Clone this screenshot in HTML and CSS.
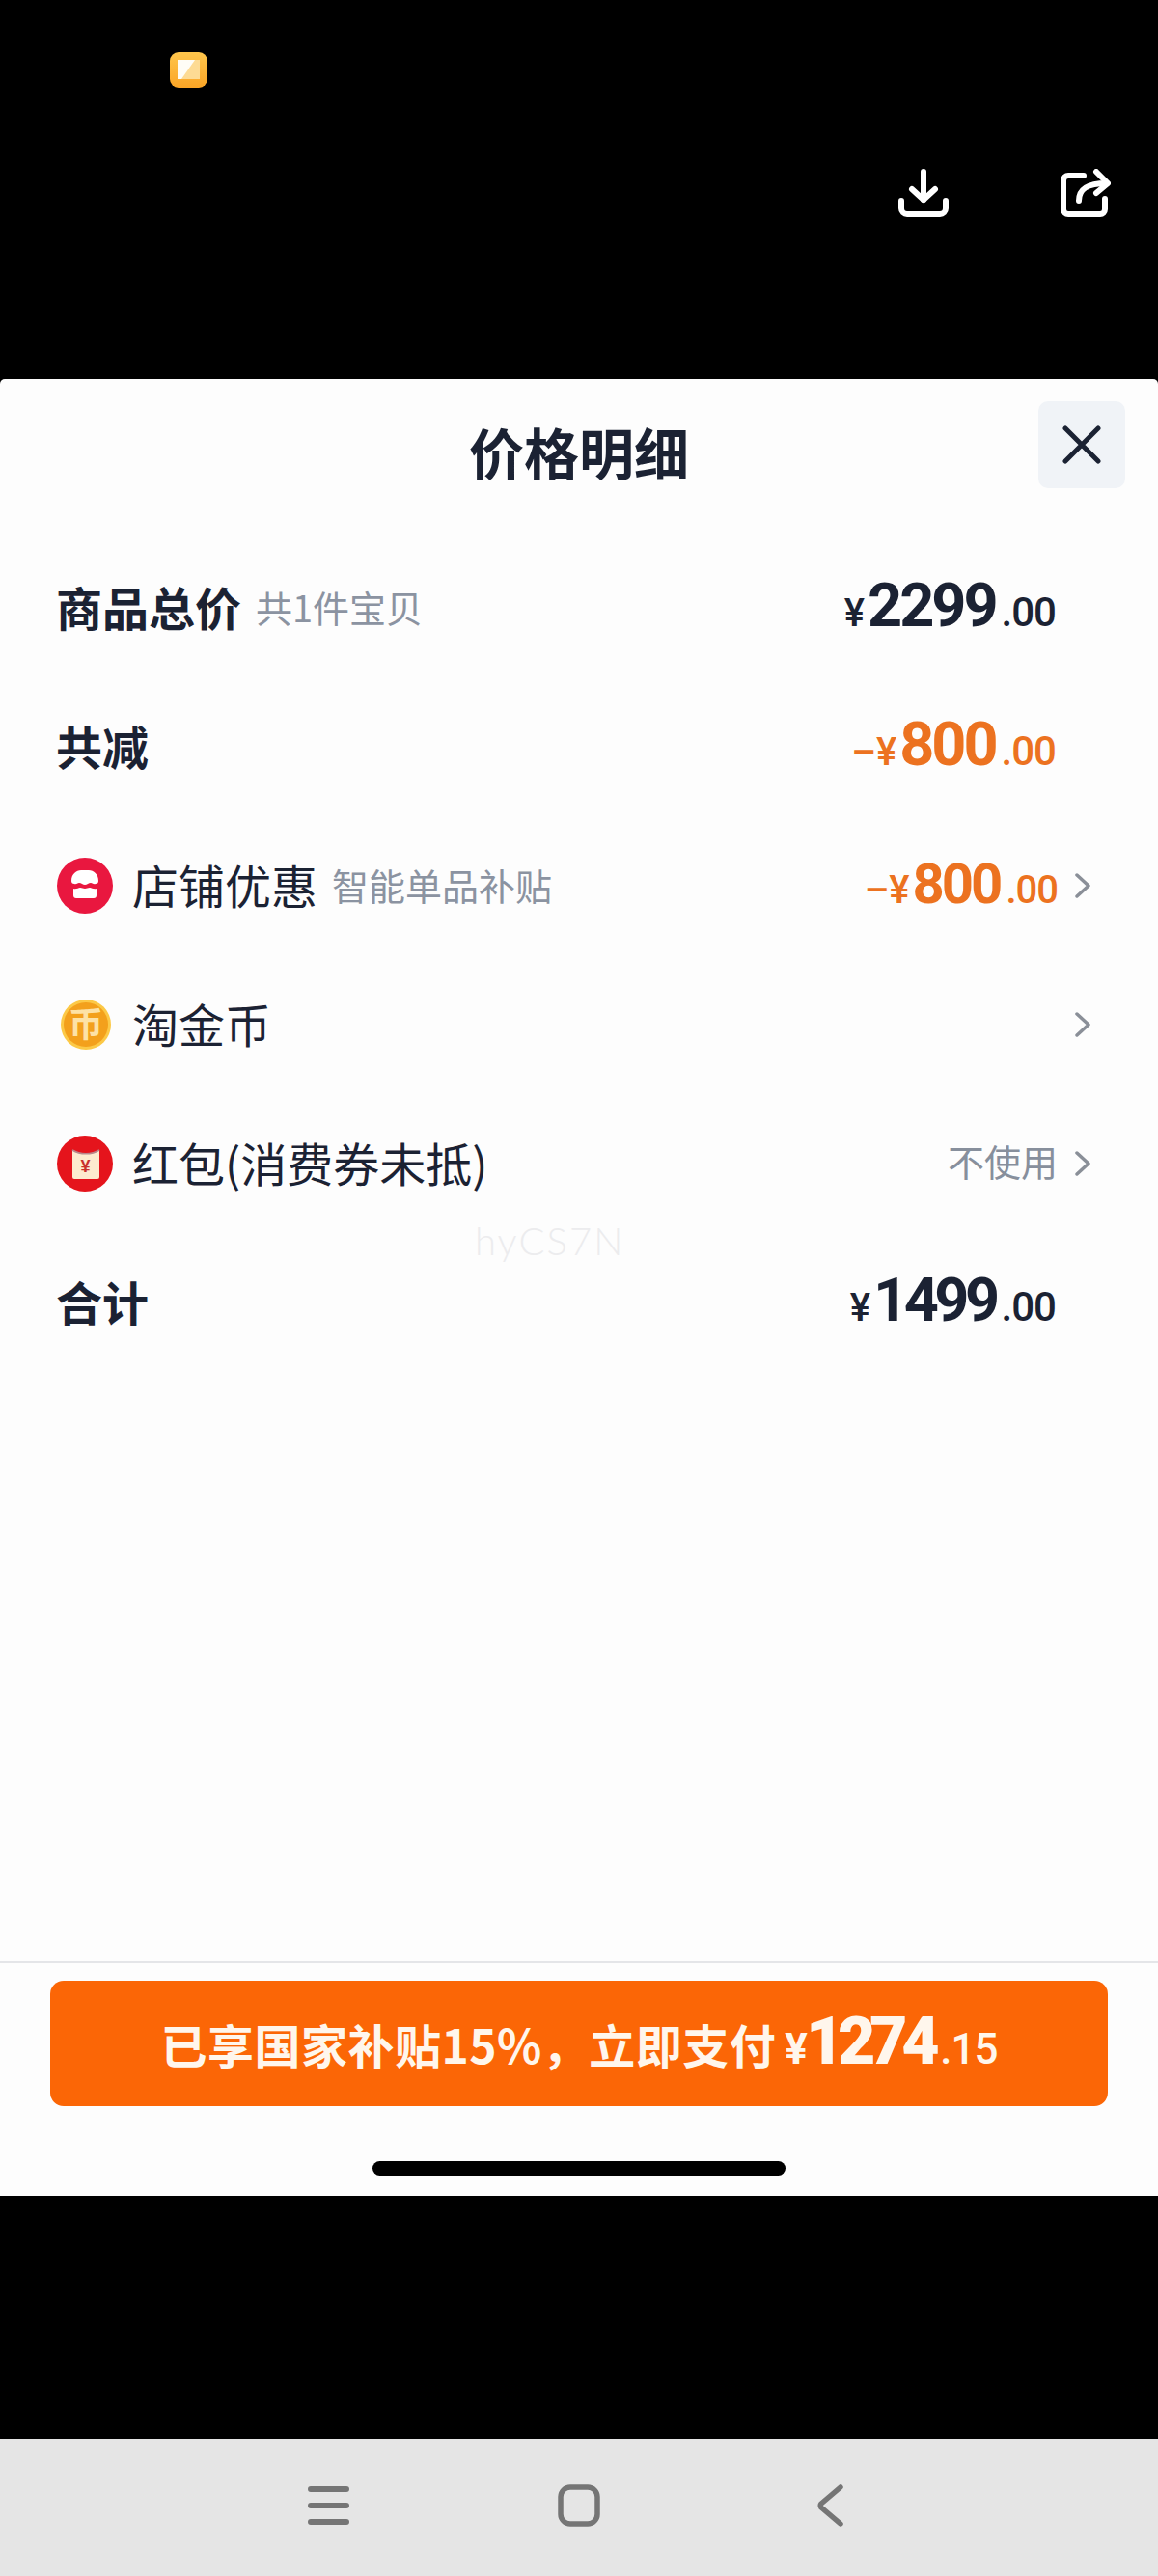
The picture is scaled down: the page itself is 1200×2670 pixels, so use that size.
FILE: index.html
```html
<!DOCTYPE html>
<html lang="zh-CN">
<head>
    <meta charset="UTF-8">
    <meta name="viewport" content="width=device-width, initial-scale=1.0">
    <title>价格明细</title>
    <link rel="stylesheet" href="styles.css">
</head>
<body>

    <div class="top">
        <svg class="app-icon" viewBox="0 0 39 37">
            <defs>
                <linearGradient id="appBg" x1="0" y1="0" x2="0" y2="1">
                    <stop offset="0" stop-color="#ffc64c"/>
                    <stop offset="1" stop-color="#fba526"/>
                </linearGradient>
            </defs>
            <rect width="39" height="37" rx="9" fill="url(#appBg)"/>
            <rect x="8" y="8" width="23" height="20" fill="#fddb94"/>
            <path d="M8 8h18L12 28H8z" fill="#fffdf6"/>
        </svg>
        <div class="top-actions">
            <svg class="top-icon" viewBox="0 0 52 50" fill="none" stroke="#fff" stroke-width="6" stroke-linecap="round" stroke-linejoin="round">
                <path d="M26 3v29"/>
                <path d="M14 21l12 11 12-11"/>
                <path d="M3 33v8a6 6 0 0 0 6 6h34a6 6 0 0 0 6-6v-8"/>
            </svg>
            <svg class="top-icon" viewBox="0 0 52 50" fill="none" stroke="#fff" stroke-width="6" stroke-linecap="round" stroke-linejoin="round">
                <path d="M24 7H8a5 5 0 0 0-5 5v30a5 5 0 0 0 5 5h33a5 5 0 0 0 5-5v-11"/>
                <path d="M19 33c0-12 8-18 29-18"/>
                <path d="M37 3l12 12-12 10"/>
            </svg>
        </div>
    </div>

    <div class="sheet">
        <div class="sheet-head">
            <h1>价格明细</h1>
            <div class="close">
                <svg viewBox="0 0 40 40" fill="none" stroke="#1b2233" stroke-width="5" stroke-linecap="round">
                    <path d="M3 3l34 34M37 3L3 37"/>
                </svg>
            </div>
        </div>

        <div class="rows">
            <div class="row">
                <span class="label bold">商品总价</span>
                <span class="note">共1件宝贝</span>
                <span class="amount"><i>¥</i><b>2299</b><em>.00</em></span>
            </div>
            <div class="row">
                <span class="label bold">共减</span>
                <span class="amount orange"><i>–¥</i><b>800</b><em>.00</em></span>
            </div>
            <div class="row has-arrow">
                <svg class="row-icon" viewBox="0 0 58 58">
                    <circle cx="29" cy="29" r="29" fill="#e9173f"/>
                    <path d="M15 24c0-7 5-11 10-11h8c5 0 10 4 10 11 0 2-1 3-3 3-2 1-3-1-5-1s-4 2-6 2-4-2-6-2-3 2-5 1c-2 0-3-1-3-3z" fill="#fff"/>
                    <path d="M17 32c3 1 5-1 7-1s3 1 5 1 3-1 5-1 4 2 7 1v7a3 3 0 0 1-3 3H20a3 3 0 0 1-3-3z" fill="#fff"/>
                </svg>
                <span class="label">店铺优惠</span>
                <span class="note">智能单品补贴</span>
                <span class="amount orange small"><i>–¥</i><b>800</b><em>.00</em></span>
                <svg class="arrow" viewBox="0 0 18 26" fill="none" stroke="#8a8f98" stroke-width="3.500" stroke-linecap="round" stroke-linejoin="round">
                    <path d="M3 2l12 11L3 24"/>
                </svg>
            </div>
            <div class="row has-arrow">
                <svg class="row-icon" viewBox="0 0 58 58">
                    <circle cx="30" cy="29" r="26" fill="#fcc947"/>
                    <circle cx="30" cy="29" r="23" fill="#f3a01c"/>
                    <text class="coin-text" x="30" y="42">币</text>
                </svg>
                <span class="label">淘金币</span>
                <svg class="arrow push" viewBox="0 0 18 26" fill="none" stroke="#8a8f98" stroke-width="3.500" stroke-linecap="round" stroke-linejoin="round">
                    <path d="M3 2l12 11L3 24"/>
                </svg>
            </div>
            <div class="row has-arrow">
                <svg class="row-icon" viewBox="0 0 58 58">
                    <circle cx="29" cy="29" r="29" fill="#e5141c"/>
                    <rect x="16" y="12" width="28" height="33" rx="2" fill="#fdebcf"/>
                    <path d="M16 12h28v3c-8 5-20 5-28 0z" fill="#e5141c"/>
                    <path d="M16 15c8 5 20 5 28 0" fill="none" stroke="#b9868a" stroke-width="1.500"/>
                    <text class="packet-text" x="29.500" y="38">¥</text>
                </svg>
                <span class="label">红包(消费券未抵)</span>
                <span class="hint">不使用</span>
                <svg class="arrow" viewBox="0 0 18 26" fill="none" stroke="#8a8f98" stroke-width="3.500" stroke-linecap="round" stroke-linejoin="round">
                    <path d="M3 2l12 11L3 24"/>
                </svg>
            </div>
            <div class="row">
                <span class="label bold">合计</span>
                <span class="amount total"><i>¥</i><b>1499</b><em>.00</em></span>
            </div>
        </div>

        <div class="watermark">hyCS7N</div>

        <div class="sheet-foot">
            <div class="pay-btn">
                <span>已享国家补贴15%，立即支付</span>
                <i>¥</i><b>1274</b><em>.15</em>
            </div>
            <div class="home-bar"></div>
        </div>
    </div>

    <div class="gap"></div>

    <div class="nav">
        <svg class="nav-menu" viewBox="0 0 43 43" fill="none" stroke="#757575" stroke-width="6" stroke-linecap="round">
            <path d="M3 4h37M3 21h37M3 38h37"/>
        </svg>
        <svg class="nav-home" viewBox="0 0 44 44" fill="none" stroke="#757575" stroke-width="5.500">
            <rect x="3" y="3" width="38" height="38" rx="10"/>
        </svg>
        <svg class="nav-back" viewBox="0 0 27 44" fill="none" stroke="#757575" stroke-width="5.500" stroke-linecap="round" stroke-linejoin="round">
            <path d="M24 3L4 20q-1.500 2 0 4l20 17"/>
        </svg>
    </div>

</body>
</html>
```

FILE: styles.css
```css
* {
    box-sizing: border-box;
}

body {
    font-family: 'Noto Sans CJK SC', 'Noto Sans', sans-serif;
    background-color: #000;
    margin: 0;
    height: 2670px;
    display: flex;
    flex-direction: column;
    overflow: hidden;
    color: #1b2233;
}

.top {
    height: 393px;
    flex: none;
    display: flex;
    justify-content: space-between;
    align-items: flex-start;
    padding: 54px 49px 0 176px;
}

.app-icon {
    width: 39px;
    height: 37px;
}

.top-actions {
    display: flex;
    gap: 116px;
    margin-top: 121px;
}

.top-icon {
    width: 52px;
    height: 50px;
}

.sheet {
    height: 1883px;
    flex: none;
    position: relative;
    display: flex;
    flex-direction: column;
    background-color: #fdfdfd;
    border-radius: 5px 5px 0 0;
}

.sheet-head {
    height: 165px;
    flex: none;
    display: grid;
    grid-template-columns: 1fr auto 1fr;
    padding-top: 23px;
}

h1 {
    grid-column: 2;
    margin: 19px 0 0;
    font-size: 57px;
    line-height: 64px;
    font-weight: 700;
    color: #1b2233;
}

.close {
    grid-column: 3;
    justify-self: end;
    width: 90px;
    height: 90px;
    margin-right: 34px;
    display: flex;
    align-items: center;
    justify-content: center;
    background-color: #f0f3f7;
    border-radius: 10px;
}

.close svg {
    width: 40px;
    height: 40px;
}

.rows {
    flex: none;
}

.row {
    height: 144px;
    display: flex;
    align-items: center;
    padding: 0 106px 0 58px;
}

.row.has-arrow {
    padding-right: 69px;
}

.row-icon {
    width: 58px;
    height: 58px;
    flex: none;
    margin-left: 1px;
    margin-right: 20px;
}

.label {
    font-size: 48px;
    line-height: 60px;
    margin-bottom: 5px;
}

.label.bold {
    font-weight: 700;
}

.note {
    margin-left: 15px;
    margin-bottom: 2px;
    font-size: 38px;
    line-height: 60px;
    color: #8b93a1;
}

.hint {
    margin-left: auto;
    margin-bottom: 6px;
    font-size: 38px;
    line-height: 60px;
    color: #878f9c;
}

.amount {
    margin-left: auto;
    margin-bottom: 5px;
    display: flex;
    align-items: baseline;
    font-family: Roboto, 'Liberation Sans', sans-serif;
    color: #1b2233;
}

.amount i {
    font-style: normal;
    font-size: 40px;
    font-weight: 500;
    margin-right: 3px;
}

.amount b {
    font-size: 63px;
    font-weight: 700;
    letter-spacing: -3px;
}

.amount em {
    font-style: normal;
    font-size: 42px;
    font-weight: 500;
    margin-left: 6px;
    letter-spacing: -1px;
}

.amount.orange {
    color: #ec7220;
}

.amount.small b {
    font-size: 58px;
}

.amount.small em {
    font-size: 40px;
}

.amount.total b {
    letter-spacing: -4.500px;
}

.arrow {
    width: 18px;
    height: 26px;
    flex: none;
    margin-left: 17px;
}

.arrow.push {
    margin-left: auto;
}

.coin-text {
    font-family: 'Noto Sans CJK SC', sans-serif;
    font-size: 36px;
    font-weight: 700;
    fill: #fde2a6;
    text-anchor: middle;
}

.packet-text {
    font-family: 'Liberation Sans', sans-serif;
    font-size: 18px;
    font-weight: 700;
    fill: #c9302c;
    text-anchor: middle;
}

.watermark {
    position: absolute;
    left: 492px;
    top: 868px;
    font-family: Lato, 'Liberation Sans', sans-serif;
    font-size: 40px;
    font-weight: 300;
    line-height: 50px;
    letter-spacing: 2px;
    color: #ececee;
}

.sheet-foot {
    margin-top: auto;
    border-top: 2px solid #e4e5e8;
    padding: 18px 52px 21px;
}

.pay-btn {
    height: 130px;
    display: flex;
    align-items: baseline;
    justify-content: center;
    padding-top: 23px;
    background-color: #fb6606;
    border-radius: 14px;
    color: #fff6ec;
    font-family: Roboto, 'Noto Sans CJK SC', sans-serif;
    font-weight: 700;
}

.pay-btn span {
    font-family: 'Noto Sans CJK SC', sans-serif;
    font-size: 48px;
    font-weight: 700;
    letter-spacing: 0.500px;
}

.pay-btn i {
    font-style: normal;
    font-size: 44px;
    margin-left: 9px;
    margin-right: -2px;
}

.pay-btn b {
    font-size: 68px;
    letter-spacing: -6.300px;
}

.pay-btn em {
    font-style: normal;
    font-size: 44px;
    font-weight: 500;
    letter-spacing: -1px;
    margin-left: 7px;
}

.home-bar {
    width: 428px;
    height: 15px;
    margin: 57px auto 0;
    background-color: #000;
    border-radius: 8px;
}

.gap {
    height: 252px;
    flex: none;
}

.nav {
    height: 142px;
    flex: none;
    background-color: #e5e5e5;
    display: flex;
    align-items: center;
    gap: 216px;
    padding: 0 0 4px 319px;
}

.nav-menu {
    width: 43px;
    height: 43px;
}

.nav-home {
    width: 44px;
    height: 44px;
}

.nav-back {
    width: 27px;
    height: 44px;
    margin-left: 9px;
}
```
